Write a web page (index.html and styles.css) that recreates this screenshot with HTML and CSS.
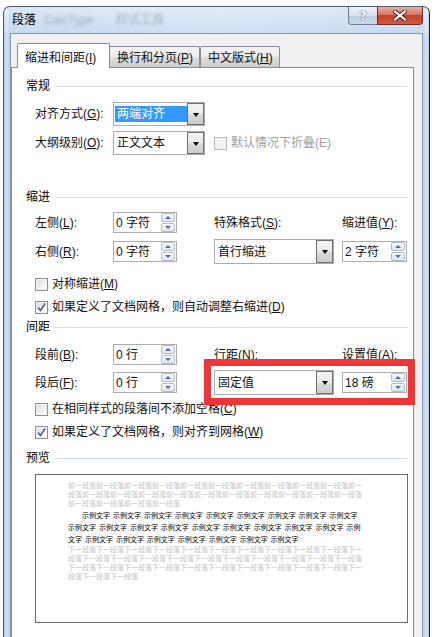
FILE: index.html
```html
<!DOCTYPE html>
<html lang="zh-CN">
<head>
  <meta charset="UTF-8" />
  <meta name="viewport" content="width=device-width, initial-scale=1.0"/>
  <title>段落</title>
  <link rel="stylesheet" href="styles.css">
</head>
<body>
  <div class="window">
    <div class="titlebar">
      <span class="title">段落</span>
      <span class="ghost">CalcType</span>
      <span class="ghost ghost-cn">样式工具</span>
      <div class="caption">
        <span class="cap-help">?</span>
        <span class="cap-close">
          <svg width="14" height="11" viewBox="0 0 14 11">
            <path d="M2 1.5 L12 9.5 M12 1.5 L2 9.5" stroke="#4a1d17" stroke-width="4" stroke-linecap="square"/>
            <path d="M2 1.5 L12 9.5 M12 1.5 L2 9.5" stroke="#fff" stroke-width="2.2" stroke-linecap="square"/>
          </svg>
        </span>
      </div>
    </div>

    <div class="client">
      <div class="tabs">
        <div class="tab tab-active">缩进和间距(<u>I</u>)</div>
        <div class="tab tab-2">换行和分页(<u>P</u>)</div>
        <div class="tab tab-3">中文版式(<u>H</u>)</div>
      </div>

      <div class="panel">
        <!-- 常规 -->
        <div class="group-title sp-11">常规</div>
        <div class="row sp-9">
          <span class="c-label">对齐方式(<u>G</u>):</span>
          <div class="combo combo-sm">
            <span class="combo-text"><span class="selected">两端对齐</span></span>
            <span class="drop"></span>
          </div>
        </div>
        <div class="row sp-5">
          <span class="c-label">大纲级别(<u>O</u>):</span>
          <div class="combo combo-sm">
            <span class="combo-text">正文文本</span>
            <span class="drop"></span>
          </div>
          <span class="check disabled off-1"><span class="box"></span>默认情况下折叠(E)</span>
        </div>

        <!-- 缩进 -->
        <div class="group-title sp-35">缩进</div>
        <div class="row row-21 sp-8">
          <span class="c-label">左侧(<u>L</u>):</span>
          <div class="c-ctrl">
            <div class="spin"><span class="spin-val">0 字符</span><span class="spin-btns"><span class="up"></span><span class="down"></span></span></div>
          </div>
          <span class="c-mid">特殊格式(<u>S</u>):</span>
          <span>缩进值(<u>Y</u>):</span>
        </div>
        <div class="row row-25 sp-6">
          <span class="c-label">右侧(<u>R</u>):</span>
          <div class="c-ctrl">
            <div class="spin"><span class="spin-val">0 字符</span><span class="spin-btns"><span class="up"></span><span class="down"></span></span></div>
          </div>
          <div class="c-mid">
            <div class="combo combo-lg">
              <span class="combo-text">首行缩进</span>
              <span class="drop"></span>
            </div>
          </div>
          <div class="spin spin-wide"><span class="spin-val">2 字符</span><span class="spin-btns"><span class="up"></span><span class="down"></span></span></div>
        </div>
        <div class="check sp-13"><span class="box"></span>对称缩进(<u>M</u>)</div>
        <div class="check sp-9"><span class="box checked"><svg width="11" height="11" viewBox="0 0 11 11"><path d="M2 5.5 L4.5 8.5 L9 1.5" fill="none" stroke="#4b5f8f" stroke-width="1.6"/></svg></span>如果定义了文档网格，则自动调整右缩进(<u>D</u>)</div>

        <!-- 间距 -->
        <div class="group-title sp-6">间距</div>
        <div class="row row-21 sp-10">
          <span class="c-label">段前(<u>B</u>):</span>
          <div class="c-ctrl">
            <div class="spin"><span class="spin-val">0 行</span><span class="spin-btns"><span class="up"></span><span class="down"></span></span></div>
          </div>
          <span class="c-mid">行距(<u>N</u>):</span>
          <span>设置值(<u>A</u>):</span>
        </div>
        <div class="row row-25 sp-5">
          <span class="c-label">段后(<u>F</u>):</span>
          <div class="c-ctrl">
            <div class="spin"><span class="spin-val">0 行</span><span class="spin-btns"><span class="up"></span><span class="down"></span></span></div>
          </div>
          <div class="c-mid">
            <div class="combo combo-lg">
              <span class="combo-text">固定值</span>
              <span class="drop"></span>
            </div>
          </div>
          <div class="spin spin-wide"><span class="spin-val">18 磅</span><span class="spin-btns"><span class="up"></span><span class="down"></span></span></div>
        </div>
        <div class="check sp-7"><span class="box"></span>在相同样式的段落间不添加空格(<u>C</u>)</div>
        <div class="check sp-9"><span class="box checked"><svg width="11" height="11" viewBox="0 0 11 11"><path d="M2 5.5 L4.5 8.5 L9 1.5" fill="none" stroke="#4b5f8f" stroke-width="1.6"/></svg></span>如果定义了文档网格，则对齐到网格(<u>W</u>)</div>

        <!-- 预览 -->
        <div class="group-title sp-12">预览</div>
        <div class="preview sp-9">
          <div class="pv-text">
            <p class="pv-prev">前一段落前一段落前一段落前一段落前一段落前一段落前一段落前一段落前一段落前一段落前一段落前一段落前一段落前一段落前一段落前一段落前一段落前一段落前一段落前一段落前一段落前一段落前一段落前一段落前一段落</p>
            <p class="pv-sample">示例文字 示例文字 示例文字 示例文字 示例文字 示例文字 示例文字 示例文字 示例文字 示例文字 示例文字 示例文字 示例文字 示例文字 示例文字 示例文字 示例文字 示例文字 示例文字 示例文字 示例文字 示例文字 示例文字 示例文字 示例文字 示例文字</p>
            <p class="pv-next">下一段落下一段落下一段落下一段落下一段落下一段落下一段落下一段落下一段落下一段落下一段落下一段落下一段落下一段落下一段落下一段落下一段落下一段落下一段落下一段落下一段落下一段落下一段落下一段落下一段落下一段落下一段落下一段落下一段落下一段落下一段落下一段落下一段落下一段落</p>
          </div>
        </div>

        <div class="mark"></div>
      </div>
    </div>
  </div>
</body>
</html>
```

FILE: styles.css
```css
body {
  margin: 0;
  width: 437px;
  height: 637px;
  overflow: hidden;
  background: #fff;
  font-family: "Liberation Sans", "Noto Sans CJK SC", sans-serif;
  font-size: 12px;
  line-height: 14px;
  color: #111;
}

u {
  text-underline-offset: 1px;
}

/* window frame */
.window {
  margin: 6px 0 0 3px;
  width: 427px;
  height: 640px;
  box-sizing: border-box;
  border: 1px solid #4d5a6a;
  border-right-color: #1e1e1e;
  border-bottom: none;
  border-radius: 7px 7px 0 0;
  background: linear-gradient(to right, #a8c3e3, #d6e6f6 2px, #bcd3ed 5px, #c9dcf1 50%, #bcd3ed calc(100% - 5px), #d6e6f6 calc(100% - 2px), #a8c3e3);
}

.titlebar {
  height: 26px;
  display: flex;
  align-items: center;
  background: linear-gradient(rgba(255, 255, 255, 0.45), rgba(255, 255, 255, 0.15));
  border-radius: 6px 6px 0 0;
}

.title {
  padding-left: 8px;
  color: #000;
}

.ghost {
  margin-left: 8px;
  color: rgba(40, 40, 40, 0.28);
  filter: blur(1.4px);
}

.ghost-cn {
  margin-left: 22px;
}

.caption {
  margin-left: auto;
  margin-right: 6px;
  align-self: flex-start;
  display: flex;
}

.cap-help {
  width: 29px;
  height: 18px;
  box-sizing: border-box;
  border: 1px solid #6f7f96;
  border-top: none;
  border-right: none;
  border-radius: 0 0 0 4px;
  background: linear-gradient(#edf3fa, #d3e0ef 50%, #bccde3 51%, #c9d8ea);
  display: flex;
  justify-content: center;
  align-items: center;
  font-family: "DejaVu Sans", sans-serif;
  font-weight: bold;
  font-size: 13px;
  color: #fff;
  text-shadow: 0 0 1px #3a4656, 0 0 1px #3a4656;
}

.cap-close {
  width: 46px;
  height: 18px;
  box-sizing: border-box;
  border: 1px solid #6e2b24;
  border-top: none;
  border-radius: 0 0 4px 0;
  background: linear-gradient(#eab0a2, #d8735f 45%, #c4412c 50%, #d05a3f);
  display: flex;
  justify-content: center;
  align-items: center;
}

/* client area */
.client {
  margin: 0 6px;
  height: 620px;
  border: 1px solid #8798ae;
  border-bottom: none;
  background: #f0f0f0;
}

.tabs {
  margin-top: 9px;
  padding-left: 6px;
  height: 24px;
  display: flex;
  align-items: flex-end;
}

.tab {
  box-sizing: border-box;
  height: 21px;
  padding: 4px 0 0 7px;
  border: 1px solid #898c95;
  border-bottom: none;
  border-radius: 2px 2px 0 0;
  background: linear-gradient(#f3f3f3, #ebebeb 50%, #dddddd 51%, #cfcfcf);
  white-space: nowrap;
}

.tab-active {
  width: 93px;
  height: 25px;
  padding-top: 7px;
  margin-bottom: -1px;
  background: #fff;
  position: relative;
  z-index: 2;
}

.tab-2 {
  width: 91px;
  margin-left: -1px;
  padding-left: 7px;
}

.tab-3 {
  width: 80px;
}

.panel {
  position: relative;
  width: 403px;
  height: 580px;
  box-sizing: border-box;
  padding: 0 5px 0 14px;
  border: 1px solid #898c95;
  background: #fff;
}

.group-title {
  display: flex;
  align-items: center;
  height: 14px;
  color: #000;
}

.group-title::after {
  content: '';
  flex: 1;
  height: 1px;
  margin-left: 5px;
  background: #d5dfe6;
}

.sp-5 { margin-top: 5px; }
.sp-6 { margin-top: 6px; }
.sp-7 { margin-top: 7px; }
.sp-8 { margin-top: 8px; }
.sp-9 { margin-top: 9px; }
.sp-10 { margin-top: 10px; }
.sp-11 { margin-top: 11px; }
.sp-12 { margin-top: 12px; }
.sp-13 { margin-top: 13px; }
.sp-35 { margin-top: 35px; }

.row {
  display: flex;
  align-items: center;
  padding-left: 9px;
  height: 24px;
  white-space: nowrap;
}

.row-21 { height: 21px; }
.row-25 { height: 25px; }

.c-label { width: 78px; }
.c-ctrl { width: 101px; }
.c-mid { width: 128px; }

/* combo box */
.combo {
  display: flex;
  box-sizing: border-box;
  border: 1px solid #a7abb2;
  background: #fff;
}

.combo-sm {
  width: 92px;
  height: 24px;
}

.combo-lg {
  width: 120px;
  height: 25px;
}

.combo-text {
  flex: 1;
  display: flex;
  align-items: center;
  padding-left: 3px;
}

.combo-text .selected {
  margin-left: -2px;
  align-self: stretch;
  margin-top: 3px;
  margin-bottom: 3px;
  flex: 1;
  padding-left: 2px;
  background: #3399ff;
  color: #fff;
  display: flex;
  align-items: center;
}

.drop {
  width: 17px;
  box-sizing: border-box;
  border: 1px solid #6f6f6f;
  background: linear-gradient(#f4f4f4, #e9e9e9 50%, #dadada 51%, #cdcdcd);
  display: flex;
  justify-content: center;
  align-items: center;
}

.drop::after {
  content: '';
  border-left: 3px solid transparent;
  border-right: 3px solid transparent;
  border-top: 4px solid #000;
  margin-top: 1px;
}

/* spin box */
.spin {
  width: 64px;
  height: 21px;
  box-sizing: border-box;
  border: 1px solid #abadb3;
  background: #fff;
  display: flex;
  align-items: center;
}

.spin-wide {
  width: 65px;
}

.spin-val {
  flex: 1;
  padding-left: 2px;
}

.spin-btns {
  width: 14px;
  height: 19px;
  margin-right: 1px;
  display: flex;
  flex-direction: column;
  gap: 1px;
}

.spin-btns span {
  flex: 1;
  border: 1px solid #b3bdca;
  border-radius: 2px;
  background: linear-gradient(#f6f8fb, #dde5ef);
  display: flex;
  justify-content: center;
  align-items: center;
}

.spin-btns .up::after {
  content: '';
  border-left: 3px solid transparent;
  border-right: 3px solid transparent;
  border-bottom: 3px solid #5a6d93;
}

.spin-btns .down::after {
  content: '';
  border-left: 3px solid transparent;
  border-right: 3px solid transparent;
  border-top: 3px solid #5a6d93;
}

/* check boxes */
.check {
  display: flex;
  align-items: center;
  height: 14px;
  padding-left: 9px;
  white-space: nowrap;
}

.row .check {
  padding-left: 0;
}

.off-1 {
  margin-left: 9px;
}

.box {
  width: 13px;
  height: 13px;
  box-sizing: border-box;
  margin-right: 4px;
  border: 1px solid #8e8f8f;
  background: linear-gradient(135deg, #d8d8d8, #f6f6f6 70%, #fff);
  box-shadow: inset 0 0 0 1px #f4f4f4;
  display: flex;
  justify-content: center;
  align-items: center;
}

.check.disabled {
  color: #a0a0a0;
}

.check.disabled .box {
  border-color: #b9b9b9;
  background: #f4f4f4;
}

/* preview */
.preview {
  margin-left: 9px;
  height: 149px;
  box-sizing: border-box;
  padding: 6px 0 0 32px;
  border: 1px solid #6a6a6a;
  background: #fff;
}

.pv-text {
  width: 295px;
  font-size: 7px;
}

.pv-text p {
  margin: 0;
  word-spacing: 1px;
}

.pv-prev,
.pv-next {
  line-height: 9px;
  color: #c4c4c4;
}

.pv-sample {
  margin-top: 2px !important;
  line-height: 12px;
  text-indent: 14px;
  color: #000;
}

.pv-next {
  margin-top: -1px !important;
}

/* red highlight frame */
.mark {
  position: absolute;
  left: 192px;
  top: 291px;
  width: 211px;
  height: 46px;
  box-sizing: border-box;
  border: 7px solid #ef3535;
}
```
